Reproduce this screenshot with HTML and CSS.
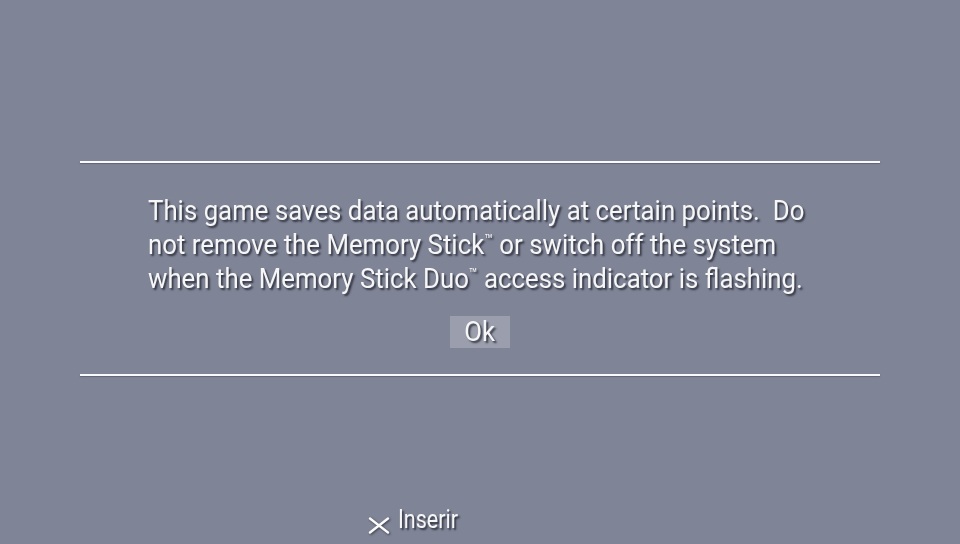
FILE: index.html
```html
<!DOCTYPE html>
<html>
<head>
<meta charset="utf-8">
<link rel="stylesheet" href="styles.css">
</head>
<body>
<div class="screen">
  <div class="dialog">
    <div class="rule"></div>
    <div class="body">
      <p class="message">This game saves data automatically at certain points.&nbsp; Do<br>not remove the Memory Stick<span class="tm">™</span> or switch off the system<br>when the Memory Stick Duo<span class="tm">™</span> access indicator is flashing.</p>
      <div class="ok"><span class="ok-text">Ok</span></div>
    </div>
    <div class="rule"></div>
  </div>
  <div class="footer">
    <svg class="cross" viewBox="0 0 22 17" width="22" height="17"><path d="M2 1.5 L20 15.5 M20 1.5 L2 15.5" stroke="#fbfbfb" stroke-width="2.4" stroke-linecap="round"/></svg>
    <span class="label">Inserir</span>
  </div>
</div>
</body>
</html>
```
FILE: styles.css
```css
html, body {
  margin: 0;
  padding: 0;
}
body {
  width: 960px;
  height: 544px;
  overflow: hidden;
  background: #7f8496;
  font-family: Roboto, "Liberation Sans", sans-serif;
  color: #f6f6f6;
}
.screen {
  width: 960px;
  height: 544px;
  display: flex;
  flex-direction: column;
}
.dialog {
  margin: 161px 0 0 80px;
  width: 800px;
  display: flex;
  flex-direction: column;
}
.rule {
  height: 2px;
  background: #fafafa;
  box-shadow: 0 1px 1px rgba(40, 44, 60, 0.35);
}
.body {
  height: 211px;
  display: flex;
  flex-direction: column;
}
.message {
  margin: 31px 0 0 68px;
  font-size: 28px;
  line-height: 34px;
  height: 102px;
  white-space: nowrap;
  text-shadow: 2px 2px 2px rgba(30, 32, 45, 0.8);
  transform: scaleX(0.922);
  transform-origin: 0 0;
}
.tm {
  font-size: 15px;
  line-height: 0;
  vertical-align: 9px;
}
.ok {
  margin: 20px 0 0 370px;
  width: 60px;
  height: 32px;
  background: #9b9eac;
  display: flex;
  justify-content: center;
}
.ok-text {
  font-size: 28px;
  line-height: 32px;
  text-shadow: 2px 2px 2px rgba(30, 32, 45, 0.8);
  transform: scaleX(0.92);
}
.footer {
  margin: 128px 0 0 368px;
  display: flex;
  align-items: flex-start;
  gap: 8px;
}
.cross {
  filter: drop-shadow(1px 1px 1px rgba(30, 32, 45, 0.7));
  margin-top: 13px;
}
.label {
  font-size: 25px;
  line-height: 30px;
  margin-top: 1px;
  transform: scaleX(0.86);
  transform-origin: 0 50%;
  text-shadow: 2px 2px 2px rgba(30, 32, 45, 0.8);
}
```
